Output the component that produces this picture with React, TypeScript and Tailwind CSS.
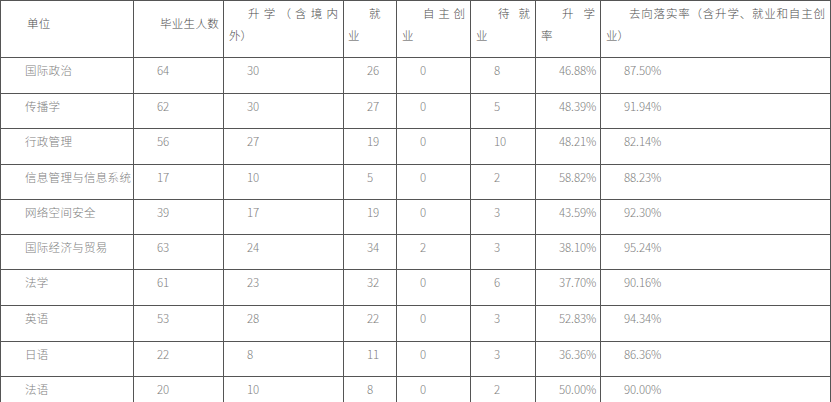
import React from "react";

const cols = [133, 90, 120, 53, 74, 65, 65, 230];

const rows: string[][] = [
  ["国际政治", "64", "30", "26", "0", "8", "46.88%", "87.50%"],
  ["传播学", "62", "30", "27", "0", "5", "48.39%", "91.94%"],
  ["行政管理", "56", "27", "19", "0", "10", "48.21%", "82.14%"],
  ["信息管理与信息系统", "17", "10", "5", "0", "2", "58.82%", "88.23%"],
  ["网络空间安全", "39", "17", "19", "0", "3", "43.59%", "92.30%"],
  ["国际经济与贸易", "63", "24", "34", "2", "3", "38.10%", "95.24%"],
  ["法学", "61", "23", "32", "0", "6", "37.70%", "90.16%"],
  ["英语", "53", "28", "22", "0", "3", "52.83%", "94.34%"],
  ["日语", "22", "8", "11", "0", "3", "36.36%", "86.36%"],
  ["法语", "20", "10", "8", "0", "2", "50.00%", "90.00%"],
];

const rowHeights = ["h-[36px]", "h-[35px]", "h-[36px]", "h-[35px]", "h-[35px]", "h-[35px]", "h-[36px]", "h-[36px]", "h-[35px]", "h-[36px]"];

function TwoLine({ first, indent, second }: { first: string[]; indent: string; second: string }) {
  return (
    <div className="pl-[5px] pr-[5px] pt-[2px]">
      <div className={`flex h-[22px] items-center justify-between ${indent}`}>
        {first.map((c, i) => (
          <span key={i}>{c}</span>
        ))}
      </div>
      <div className="flex h-[22px] items-center">{second}</div>
    </div>
  );
}

export default function App() {
  const cellBase = "border-r border-b border-[#555] overflow-hidden";
  const head = `${cellBase} h-[57px] text-[11.5px] text-[#4d4d4d] font-light`;
  return (
    <div
      className="w-[831px] h-[402px] overflow-hidden bg-white"
      style={{ fontFamily: '"Noto Sans CJK SC", "Noto Sans", sans-serif' }}
    >
      <div
        className="grid border-l border-t border-[#555]"
        style={{ gridTemplateColumns: cols.map((c) => `${c}px`).join(" "), width: 831 }}
      >
        {/* header */}
        <div className={head}>
          <div className="pl-[26px] pt-[14px] leading-[17px] tracking-[0.3px]">单位</div>
        </div>
        <div className={head}>
          <div className="pl-[26px] pt-[14px] leading-[17px] tracking-[0.3px]">毕业生人数</div>
        </div>
        <div className={head}>
          <TwoLine first={["升", "学", "（", "含", "境", "内"]} indent="pl-[19px]" second="外）" />
        </div>
        <div className={head}>
          <div className="pl-[4px] pt-[2px]">
            <div className="flex h-[22px] items-center pl-[21px]">就</div>
            <div className="flex h-[22px] items-center">业</div>
          </div>
        </div>
        <div className={head}>
          <TwoLine first={["自", "主", "创"]} indent="pl-[21px]" second="业" />
        </div>
        <div className={head}>
          <TwoLine first={["待", "就"]} indent="pl-[22px]" second="业" />
        </div>
        <div className={head}>
          <TwoLine first={["升", "学"]} indent="pl-[21px]" second="率" />
        </div>
        <div className={head}>
          <TwoLine
            first={["去", "向", "落", "实", "率", "（", "含", "升", "学", "、", "就", "业", "和", "自", "主", "创"]}
            indent="pl-[23px]"
            second="业）"
          />
        </div>

        {/* data */}
        {rows.map((r, ri) =>
          r.map((v, ci) => (
            <div key={`${ri}-${ci}`} className={`${cellBase} ${rowHeights[ri]}`}>
              <div
                className={`pt-[4px] leading-[17px] text-[#808080] font-light ${
                  ci === 0
                    ? "pl-[24px] text-[11.5px] tracking-[0.3px] whitespace-nowrap"
                    : "pl-[23px] text-[11.5px] tracking-[-0.1px]"
                }`}
              >
                {v}
              </div>
            </div>
          ))
        )}
      </div>
    </div>
  );
}
